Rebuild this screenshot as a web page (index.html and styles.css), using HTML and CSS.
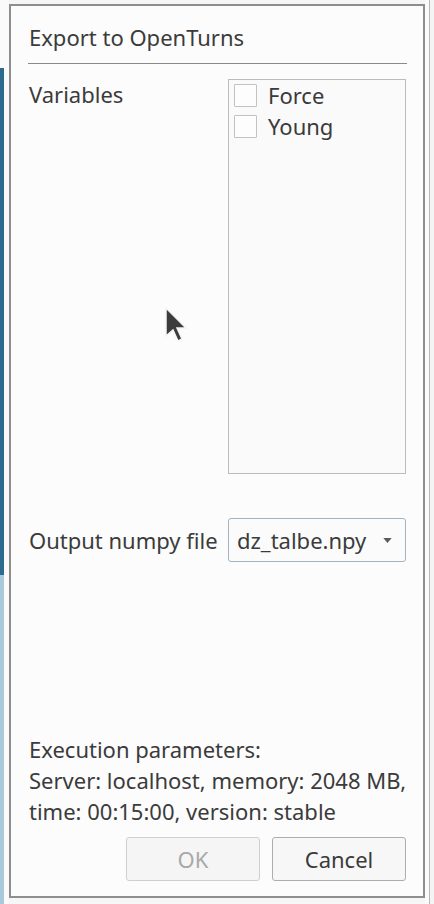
FILE: index.html
```html
<!DOCTYPE html>
<html lang="en">
<head>
    <meta charset="UTF-8">
    <meta name="viewport" content="width=device-width, initial-scale=1.0">
    <title>Export to OpenTurns</title>
    <link rel="stylesheet" href="styles.css">
</head>
<body>
    <div class="desk">
        <div class="side-left">
            <div class="stripe-top"></div>
            <div class="stripe-dark"></div>
            <div class="stripe-light"></div>
        </div>
        <div class="dialog">
            <div class="title">Export to OpenTurns</div>
            <div class="rule"></div>

            <div class="row vars-row">
                <div class="label">Variables</div>
                <div class="list">
                    <label class="item"><span class="check"></span>Force</label>
                    <label class="item"><span class="check"></span>Young</label>
                </div>
            </div>

            <div class="row file-row">
                <div class="label">Output numpy file</div>
                <div class="combo">
                    <span>dz_talbe.npy</span>
                    <svg class="arrow" width="10" height="6" viewBox="0 0 10 6"><path d="M0 0 L10 0 L5 6 Z" fill="#5a5a5a"/></svg>
                </div>
            </div>

            <div class="spacer"></div>

            <div class="params">
                <p>Execution parameters:</p>
                <p>Server: localhost, memory: 2048 MB,</p>
                <p>time: 00:15:00, version: stable</p>
            </div>

            <div class="buttons">
                <button class="btn" disabled>OK</button>
                <button class="btn">Cancel</button>
            </div>

            <svg class="cursor" width="26" height="38" viewBox="0 0 26 38">
                <path d="M2 2 L2 30 L9 24 L14 35 L18 33 L13 22 L22 22 Z" fill="#3c3c3c" stroke="#f4f4f4" stroke-width="1.5"/>
            </svg>
        </div>
        <div class="side-right"></div>
    </div>
</body>
</html>
```

FILE: styles.css
```css
body {
    margin: 0;
    padding: 0;
    background-color: #f6f6f6;
    font-family: "Noto Sans", "Open Sans", sans-serif;
    color: #3b3b3b;
}
.desk {
    display: flex;
    width: 434px;
    height: 904px;
    overflow: hidden;
}
.side-left {
    width: 9px;
    display: flex;
    flex-direction: column;
    background-color: #fafafa;
}
.stripe-top {
    height: 68px;
}
.stripe-dark {
    width: 4px;
    height: 507px;
    background-color: #2c6a90;
}
.stripe-light {
    width: 4px;
    flex: 1;
    background-color: #a9c8dc;
}
.dialog {
    position: relative;
    box-sizing: border-box;
    width: 416px;
    height: 894px;
    margin-top: 4px;
    border: 2px solid #8e8e8e;
    background-color: #fcfcfc;
    padding: 0 17px 0 18px;
    display: flex;
    flex-direction: column;
}
.side-right {
    flex: 1;
    border-left: 4px solid #fbfbfb;
    box-shadow: inset 1px 0 0 #b8b8b8;
    background-color: #f4f4f4;
}
.title {
    font-size: 22px;
    margin-top: 16px;
    line-height: 30px;
}
.rule {
    height: 1px;
    background-color: #8a8a8a;
    margin: 11px -1px 0 -1px;
}
.row {
    display: flex;
    justify-content: space-between;
    font-size: 22px;
}
.vars-row {
    margin-top: 15px;
}
.vars-row .label {
    line-height: 30px;
}
.list {
    box-sizing: border-box;
    width: 178px;
    height: 395px;
    border: 1px solid #bcbcbc;
    background-color: #fafafa;
    padding: 4px 0 0 5px;
    display: flex;
    flex-direction: column;
    gap: 8px;
}
.item {
    display: flex;
    align-items: center;
    gap: 11px;
    height: 23px;
    line-height: 23px;
}
.check {
    box-sizing: border-box;
    width: 23px;
    height: 23px;
    border: 1px solid #c2c2c2;
    border-radius: 1px;
    background-color: #fdfdfd;
}
.file-row {
    margin-top: 44px;
    align-items: center;
}
.combo {
    box-sizing: border-box;
    width: 178px;
    height: 44px;
    border: 1px solid #a2b4c4;
    border-radius: 3px;
    background-color: #fbfbfb;
    display: flex;
    align-items: center;
    justify-content: space-between;
    padding: 0 13px 0 8px;
}
.arrow {
    width: 9px;
    height: 5px;
}
.spacer {
    flex: 1;
}
.params {
    font-size: 22px;
    line-height: 31px;
    white-space: nowrap;
    margin-right: -10px;
}
.params p {
    margin: 0;
}
.buttons {
    display: flex;
    justify-content: flex-end;
    gap: 12px;
    margin-top: 10px;
    margin-bottom: 15px;
}
.btn {
    box-sizing: border-box;
    width: 134px;
    height: 44px;
    font-family: "Noto Sans", "Open Sans", sans-serif;
    font-size: 22px;
    color: #3b3b3b;
    background-color: #f7f7f7;
    border: 1px solid #adadad;
    border-radius: 3px;
}
.btn:disabled {
    color: #a9a9a9;
    border-color: #cfcfcf;
    background-color: #f5f5f5;
}
.cursor {
    position: absolute;
    left: 153px;
    top: 300px;
}
```
